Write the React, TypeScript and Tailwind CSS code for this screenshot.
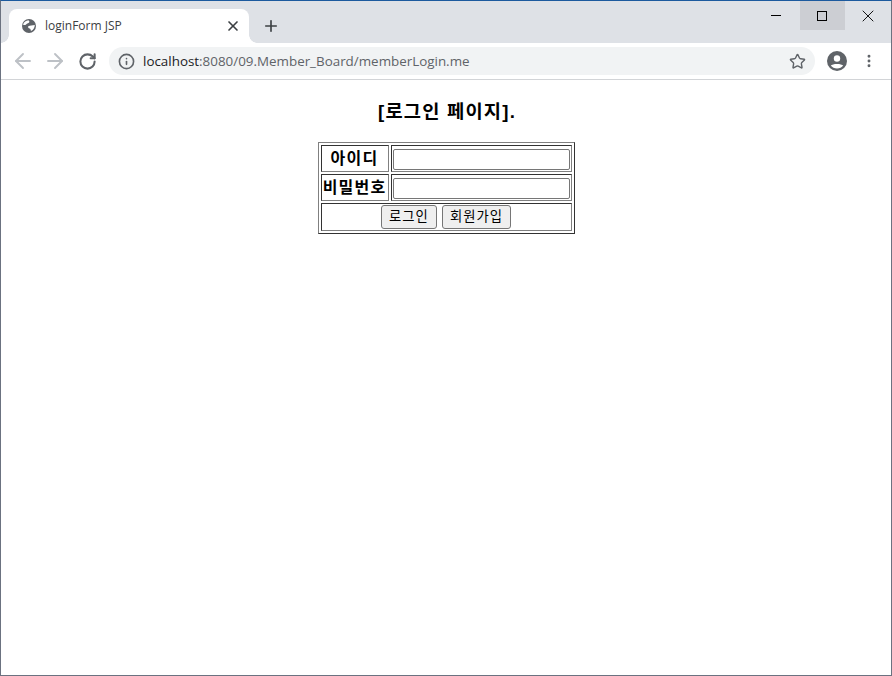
import { ArrowLeft, ArrowRight, Info, MoreVertical, Plus, RotateCw, Star, X } from "lucide-react";

const KO = "font-['Liberation_Sans','Noto_Sans_CJK_KR',sans-serif]";

function Globe() {
  return (
    <svg viewBox="0 0 16 16" className="h-4 w-4 shrink-0">
      <circle cx="8" cy="8" r="7" fill="#5f6368" />
      <path d="M2 6.5 C3 4 5 2.5 7.5 2.2 L8.5 3.8 C8 5.5 6 5.5 5 6.5 C4.2 7.3 3 7.2 2 6.5 Z" fill="#fff" />
      <path d="M7 8.5 C9 7 11.5 7.5 13.8 7 C13.8 9.5 12.5 12 10 13 C9.5 11.5 9.6 10.6 8.5 10.5 C7.5 10.4 7 9.5 7 8.5 Z" fill="#fff" />
    </svg>
  );
}

function Profile() {
  return (
    <svg viewBox="0 0 20 20" className="h-5 w-5">
      <circle cx="10" cy="10" r="10" fill="#5f6368" />
      <circle cx="10" cy="7.5" r="3.2" fill="#fff" />
      <path d="M3.8 14.6 C5.4 12.4 14.6 12.4 16.2 14.6 C14.8 16.6 12.6 17.6 10 17.6 C7.4 17.6 5.2 16.6 3.8 14.6 Z" fill="#fff" />
    </svg>
  );
}

function TitleBar() {
  return (
    <div className="relative flex h-[42px] shrink-0 bg-[#dee1e6] pl-2">
      <div className="relative mt-2 flex h-[34px] w-[240px] items-center rounded-t-lg bg-white pl-[12px] pr-[8px]">
        <span className="absolute -left-2 bottom-0 h-2 w-2 bg-[radial-gradient(circle_at_0_0,#dee1e6_7.5px,#fff_8px)]" />
        <span className="absolute -right-2 bottom-0 h-2 w-2 bg-[radial-gradient(circle_at_100%_0,#dee1e6_7.5px,#fff_8px)]" />
        <Globe />
        <span className="ml-[8px] flex-1 font-['Open_Sans',sans-serif] text-xs text-[#3c4043]">loginForm JSP</span>
        <X className="h-4 w-4 text-[#3c4043]" strokeWidth={2.5} />
      </div>
      <Plus className="ml-[13px] mt-[16px] h-[18px] w-[18px] text-[#3c4043]" strokeWidth={2.2} />
      <div className="ml-auto mr-[1px] flex h-[29px]">
        <div className="flex w-[45px] items-center justify-center pr-[3px]">
          <span className="h-px w-[10px] bg-black" />
        </div>
        <div className="flex w-[45px] items-center justify-center bg-[#ccced3] pr-px">
          <span className="h-[10px] w-[10px] border border-black" />
        </div>
        <div className="flex w-[45px] items-center justify-center">
          <X className="h-5 w-5 text-black" strokeWidth={1.1} />
        </div>
      </div>
    </div>
  );
}

function Toolbar() {
  return (
    <div className="flex h-[37px] shrink-0 items-center border-b border-[#d2d4d7] bg-white pl-[10px]">
      <ArrowLeft className="h-6 w-6 text-[#bdc1c6]" strokeWidth={1.9} />
      <ArrowRight className="ml-2 h-6 w-6 text-[#bdc1c6]" strokeWidth={1.9} />
      <RotateCw className="ml-[11px] h-[19px] w-[19px] text-[#5f6368]" strokeWidth={2.6} />
      <div className="ml-3 flex h-7 w-[706px] items-center rounded-full bg-[#f1f3f4] pl-[9px] pr-[9px]">
        <Info className="h-[17px] w-[17px] text-[#5f6368]" strokeWidth={2.3} />
        <span className="ml-[8px] flex-1 font-['Open_Sans',sans-serif] text-[13.4px] text-[#5f6368]">
          <span className="text-[#202124]">localhost</span>:8080/09.Member_Board/memberLogin.me
        </span>
        <Star className="h-[17px] w-[17px] text-[#5f6368]" strokeWidth={2} />
      </div>
      <div className="ml-3">
        <Profile />
      </div>
      <MoreVertical className="ml-[14px] h-4 w-4 fill-current text-[#5f6368]" strokeWidth={2.4} />
    </div>
  );
}

function TextInput() {
  return (
    <input
      type="text"
      className="block h-[21px] w-[177px] rounded-[2px] border border-[#767676] bg-white outline-none"
    />
  );
}

function LoginTable() {
  const edge = "border border-t-[#333] border-l-[#333] border-r-[#808080] border-b-[#808080]";
  const label = `${edge} py-px text-center text-base font-bold leading-[23px] tracking-[1.2px] text-black`;
  const inputCell = `${edge} px-px pt-[3px] pb-px`;
  const button =
    "h-6 rounded-[3px] border border-[#767676] bg-[#efefef] text-[13.33px] leading-none tracking-[1px] text-black";

  return (
    <table className="w-[257px] border-separate border-spacing-[2px] border border-t-[#808080] border-l-[#808080] border-r-[#333] border-b-[#333]">
      <tbody>
        <tr>
          <th className={`${label} w-[68px]`}>아이디</th>
          <td className={inputCell}>
            <TextInput />
          </td>
        </tr>
        <tr>
          <th className={label}>비밀번호</th>
          <td className={inputCell}>
            <TextInput />
          </td>
        </tr>
        <tr>
          <td colSpan={2} className={`${edge} p-px`}>
            <div className="flex items-center justify-center gap-[5px]">
              <button className={`${button} w-14`}>로그인</button>
              <button className={`${button} w-[69px]`}>회원가입</button>
            </div>
          </td>
        </tr>
      </tbody>
    </table>
  );
}

export default function App() {
  return (
    <div className={`flex h-[676px] w-[892px] flex-col overflow-hidden border border-t-[#1c5a9e] border-x-[#6b7280] border-b-[#6b7280] bg-white ${KO}`}>
      <TitleBar />
      <Toolbar />
      <main className="flex flex-col items-center">
        <h3 className="mt-[18px] pl-[2px] text-[18.72px] font-bold leading-[27px] tracking-[1.2px] text-black">[로그인 페이지].</h3>
        <div className="mt-[17px]">
          <LoginTable />
        </div>
      </main>
    </div>
  );
}
